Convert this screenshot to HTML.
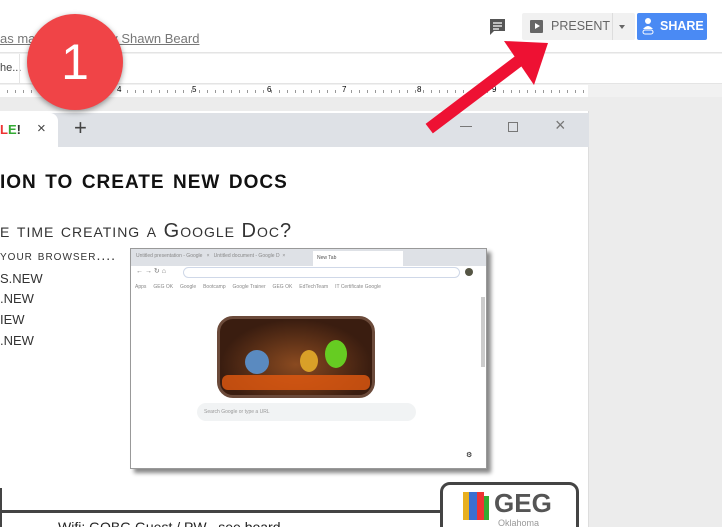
<!DOCTYPE html>
<html><head><meta charset="utf-8"><style>
*{margin:0;padding:0;box-sizing:border-box}
html,body{width:722px;height:527px;overflow:hidden}
body{background:#f1f1f1;font-family:"Liberation Sans",sans-serif;position:relative}
#w{position:absolute;left:0;top:0;width:722px;height:527px;overflow:hidden}
.a{position:absolute}
.hand{font-family:"Liberation Sans",sans-serif;font-variant:small-caps;color:#111;letter-spacing:1px}
</style></head><body><div id="w">
<div class="a" style="left:0;top:0;width:722px;height:53px;background:#fff;border-bottom:1px solid #e4e4e4"></div>
<div class="a" style="left:0;top:31px;font-size:13px;color:#777;text-decoration:underline">as made &nbsp; &nbsp; &nbsp; &nbsp; &nbsp; &nbsp; &nbsp; by Shawn Beard</div>
<svg class="a" style="left:488px;top:17px" width="20" height="20"><path d="M2 2h15v12H6l-4 4z" fill="#555"/><path d="M5 6h9M5 9h9M5 12h6" stroke="#fff" stroke-width="1.3"/></svg>
<div class="a" style="left:522px;top:13px;width:113px;height:27px;background:#f1f1f1;border-radius:2px"></div>
<div class="a" style="left:612px;top:13px;width:1px;height:27px;background:#ddd"></div>
<div class="a" style="left:530px;top:20px;width:13px;height:13px;background:#666;border-radius:1px"></div>
<div class="a" style="left:535px;top:23px;width:0;height:0;border-left:5px solid #fff;border-top:3.5px solid transparent;border-bottom:3.5px solid transparent"></div>
<div class="a" style="left:551px;top:19px;font-size:12.5px;color:#666">PRESENT</div>
<div class="a" style="left:619px;top:25px;border-top:4px solid #666;border-left:3px solid transparent;border-right:3px solid transparent"></div>
<div class="a" style="left:637px;top:13px;width:70px;height:27px;background:#4a8af4;border-radius:2px"></div>
<svg class="a" style="left:642px;top:17px" width="12" height="18"><circle cx="6" cy="4" r="3" fill="#fff"/><path d="M1 12q5-6 10 0z" fill="#fff"/><rect x="1" y="13" width="10" height="4" rx="2" fill="none" stroke="#fff"/></svg>
<div class="a" style="left:660px;top:19px;font-size:12.5px;color:#fff;font-weight:bold">SHARE</div>
<div class="a" style="left:0;top:54px;width:722px;height:30px;background:#fff;border-bottom:1px solid #e4e4e4"></div>
<div class="a" style="left:0;top:62px;font-size:11px;color:#444">he...</div>
<div class="a" style="left:19px;top:54px;width:1px;height:30px;background:#e4e4e4"></div>
<div class="a" style="left:0;top:85px;width:722px;height:12px;background:#f1f1f1"></div>
<div class="a" style="left:0;top:85px;width:588px;height:12px;background:#fff;background-image:repeating-linear-gradient(90deg,transparent 0 7px,#999 7px 8px);background-size:8px 3px;background-repeat:repeat-x;background-position:0 5px"></div>
<div class="a" style="left:37px;top:85px;font-size:8px;background:#fff">3</div>
<div class="a" style="left:117px;top:85px;font-size:8px;background:#fff">4</div>
<div class="a" style="left:192px;top:85px;font-size:8px;background:#fff">5</div>
<div class="a" style="left:267px;top:85px;font-size:8px;background:#fff">6</div>
<div class="a" style="left:342px;top:85px;font-size:8px;background:#fff">7</div>
<div class="a" style="left:417px;top:85px;font-size:8px;background:#fff">8</div>
<div class="a" style="left:492px;top:85px;font-size:8px;background:#fff">9</div>
<div class="a" style="left:0;top:97px;width:722px;height:430px;background:#ececec"></div>
<div class="a" style="left:0;top:111px;width:589px;height:416px;background:#fff;border-right:1px solid #ddd"></div>
<div class="a" style="left:0;top:113px;width:589px;height:34px;background:#dee1e6"></div>
<div class="a" style="left:0;top:113px;width:58px;height:34px;background:#fff;border-radius:0 8px 0 0"></div>
<div class="a" style="left:0;top:122px;font-size:13px;font-weight:bold"><span style="color:#e33">L</span><span style="color:#3a3">E</span><span style="color:#333">!</span></div>
<div class="a" style="left:37px;top:120px;font-size:15px;color:#444">×</div>
<div class="a" style="left:74px;top:115px;font-size:22px;color:#444">+</div>
<div class="a" style="left:460px;top:126px;width:12px;height:1px;background:#777"></div>
<div class="a" style="left:508px;top:122px;width:10px;height:10px;border:1px solid #777"></div>
<div class="a" style="left:555px;top:115px;font-size:18px;color:#777">×</div>
<div class="a hand" style="left:0;top:164px;font-size:27px;font-weight:bold">ion to create new docs</div>
<div class="a hand" style="left:0;top:220px;font-size:20px;color:#333">e time creating a Google Doc?</div>
<div class="a hand" style="left:0;top:247px;font-size:14px;color:#333">your browser....</div>
<div class="a" style="left:0;top:271px;font-size:13px;color:#333">S.NEW</div>
<div class="a" style="left:0;top:291px;font-size:13px;color:#333">.NEW</div>
<div class="a" style="left:0;top:312px;font-size:13px;color:#333">IEW</div>
<div class="a" style="left:0;top:333px;font-size:13px;color:#333">.NEW</div>
<div class="a" style="left:130px;top:248px;width:357px;height:221px;background:#fff;border:1px solid #999;box-shadow:4px 4px 4px #888"></div>
<div class="a" style="left:131px;top:249px;width:355px;height:17px;background:#dee1e6"></div>
<div class="a" style="left:313px;top:251px;width:90px;height:15px;background:#fff;font-size:5px;padding:4px 4px;color:#555">New Tab</div>
<div class="a" style="left:136px;top:253px;font-size:5px;color:#888">Untitled presentation - Google &nbsp; × &nbsp; Untitled document - Google D &nbsp;×</div>
<div class="a" style="left:131px;top:266px;width:355px;height:14px;background:#fff"></div>
<div class="a" style="left:183px;top:267px;width:277px;height:11px;border:1px solid #cfd8e8;border-radius:6px"></div>
<div class="a" style="left:136px;top:267px;font-size:7px;color:#777">← → ↻ ⌂</div>
<div class="a" style="left:465px;top:268px;width:8px;height:8px;border-radius:50%;background:#554"></div>
<div class="a" style="left:135px;top:284px;font-size:5px;color:#888;white-space:nowrap">Apps &nbsp; &nbsp; GEG OK &nbsp; &nbsp; Google &nbsp; &nbsp; Bootcamp &nbsp; &nbsp; Google Trainer &nbsp; &nbsp; GEG OK &nbsp; &nbsp; EdTechTeam &nbsp; &nbsp; IT Certificate Google</div>
<div class="a" style="left:481px;top:297px;width:4px;height:70px;background:#ccc"></div>
<div class="a" style="left:217px;top:316px;width:158px;height:82px;border-radius:16px;background:radial-gradient(ellipse at 50% 60%,#8a4a20,#3a1d10 70%);border:3px solid #6b4a3a"></div>
<div class="a" style="left:245px;top:350px;width:24px;height:24px;border-radius:50%;background:#5a8ac0"></div>
<div class="a" style="left:300px;top:350px;width:18px;height:22px;border-radius:50%;background:#d9a028"></div>
<div class="a" style="left:325px;top:340px;width:22px;height:28px;border-radius:50%;background:#6c2"></div>
<div class="a" style="left:222px;top:375px;width:148px;height:15px;background:#e45a10;border-radius:6px;opacity:.8"></div>
<div class="a" style="left:197px;top:403px;width:219px;height:18px;background:#f1f3f4;border-radius:9px;font-size:5px;color:#999;padding:6px 7px">Search Google or type a URL</div>
<div class="a" style="left:466px;top:451px;font-size:7px">⚙</div>
<div class="a" style="left:0;top:510px;width:440px;height:3px;background:#444"></div>
<div class="a" style="left:0;top:488px;width:2px;height:40px;background:#444"></div>
<div class="a" style="left:440px;top:482px;width:139px;height:60px;border:3px solid #444;border-radius:10px;background:#fff"></div>
<div class="a" style="left:463px;top:492px;width:6px;height:28px;background:#e8b020"></div>
<div class="a" style="left:469px;top:492px;width:8px;height:28px;background:#3a6fd0"></div>
<div class="a" style="left:477px;top:492px;width:7px;height:28px;background:#e33"></div>
<div class="a" style="left:484px;top:496px;width:5px;height:24px;background:#3a3"></div>
<div class="a" style="left:494px;top:488px;font-size:26px;font-weight:bold;color:#555">GEG</div>
<div class="a" style="left:498px;top:518px;font-size:9px;color:#999">Oklahoma</div>
<div class="a" style="left:58px;top:519px;font-size:14px;color:#222">Wifi: GOBG Guest / PW &nbsp; see board</div>
<div class="a" style="left:27px;top:14px;width:96px;height:96px;border-radius:50%;background:#f04447;box-shadow:0 2px 6px rgba(0,0,0,.4);color:#fff;font-size:50px;text-align:center;line-height:96px">1</div>
<svg class="a" style="left:420px;top:35px" width="140" height="110"><path d="M14 90 L100 25" stroke="#ee1133" stroke-width="12" stroke-linecap="square"/><path d="M84 6 L128 8 L114 50 Z" fill="#ee1133"/></svg>
</div></body></html>
